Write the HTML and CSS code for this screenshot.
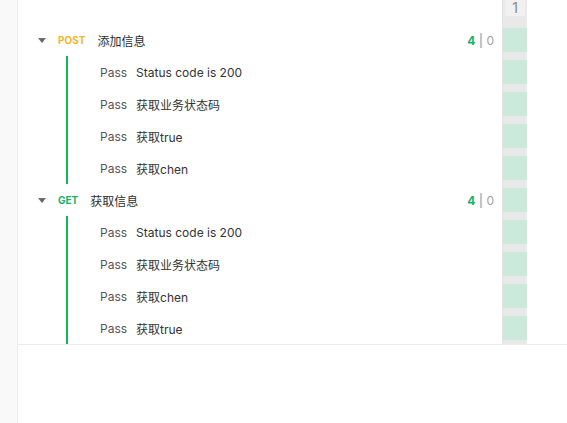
FILE: index.html
```html
<!DOCTYPE html>
<html lang="zh">
<head>
<meta charset="utf-8">
<link rel="stylesheet" href="styles.css">
</head>
<body>
<div class="app">
  <aside class="side"></aside>
  <main class="main">
    <div class="panel">
      <div class="tree">
        <div class="group">
          <div class="row head">
            <span class="caret"></span>
            <span class="method post">POST</span>
            <span class="name">添加信息</span>
            <span class="counts"><b class="ok">4</b><i class="sep"></i><span class="fail">0</span></span>
          </div>
          <div class="children">
            <div class="row test"><span class="pass">Pass</span><span class="tname">Status code is 200</span></div>
            <div class="row test"><span class="pass">Pass</span><span class="tname">获取业务状态码</span></div>
            <div class="row test"><span class="pass">Pass</span><span class="tname">获取true</span></div>
            <div class="row test"><span class="pass">Pass</span><span class="tname">获取chen</span></div>
          </div>
        </div>
        <div class="group">
          <div class="row head">
            <span class="caret"></span>
            <span class="method get">GET</span>
            <span class="name">获取信息</span>
            <span class="counts"><b class="ok">4</b><i class="sep"></i><span class="fail">0</span></span>
          </div>
          <div class="children">
            <div class="row test"><span class="pass">Pass</span><span class="tname">Status code is 200</span></div>
            <div class="row test"><span class="pass">Pass</span><span class="tname">获取业务状态码</span></div>
            <div class="row test"><span class="pass">Pass</span><span class="tname">获取chen</span></div>
            <div class="row test"><span class="pass">Pass</span><span class="tname">获取true</span></div>
          </div>
        </div>
      </div>
      <div class="iter">
        <div class="iter-head"><span class="iter-num">1</span></div>
        <div class="cell"><span></span></div>
        <div class="cell"><span></span></div>
        <div class="cell"><span></span></div>
        <div class="cell"><span></span></div>
        <div class="cell"><span></span></div>
        <div class="cell"><span></span></div>
        <div class="cell"><span></span></div>
        <div class="cell"><span></span></div>
        <div class="cell"><span></span></div>
        <div class="cell"><span></span></div>
      </div>
      <div class="spacer"></div>
    </div>
  </main>
</div>
</body>
</html>
```

FILE: styles.css
```css
* { box-sizing: border-box; }
html, body { margin: 0; padding: 0; height: 100%; background: #fff; }
body {
  font-family: Inter, "Noto Sans CJK SC", sans-serif;
  font-size: 12px;
  color: #333;
}
.app { display: flex; height: 423px; }
.side {
  width: 18px;
  background: #f9f9f9;
  border-right: 1px solid #ececec;
  flex: none;
}
.main { flex: 1; display: flex; flex-direction: column; }
.panel {
  display: flex;
  height: 345px;
  border-bottom: 1px solid #ebebeb;
}
.tree { flex: 1; padding-top: 24px; }
.row { height: 32px; display: flex; align-items: center; }
.head { padding-left: 20px; padding-right: 8px; }
.caret {
  width: 0; height: 0;
  border-left: 4px solid transparent;
  border-right: 4px solid transparent;
  border-top: 5px solid #6b6b6b;
  margin-right: 12px;
}
.method { font-size: 10px; font-weight: 700; margin-right: 12px; }
.post { color: #f4b42a; }
.get { color: #17b26a; }
.name { color: #2d2d2d; font-size: 12px; }
.counts { margin-left: auto; display: flex; align-items: center; font-size: 12px; }
.ok { color: #17b26a; font-weight: 700; }
.sep { display: inline-block; width: 2px; height: 15px; background: #c4c4c4; margin: 0 4px 0 5px; }
.fail { color: #a3a3a3; }
.children {
  margin-left: 48px;
  border-left: 2px solid #0cbb55;
  padding-left: 32px;
}
.pass { color: #555; margin-right: 9px; }
.tname { color: #333; }
.iter {
  width: 25px;
  flex: none;
  background: #e9e9e9;
  border-left: 1px solid #e2e2e2;
  display: flex;
  flex-direction: column;
}
.iter-head { height: 24px; padding: 0 2px; }
.iter-num {
  display: block;
  height: 16px;
  background: #f1f1f1;
  color: #8a8a8a;
  text-align: center;
  font-size: 14px;
  line-height: 15px;
}
.cell { height: 32px; padding: 4px 0; }
.cell span { display: block; height: 24px; background: #cbeadc; }
.spacer { width: 40px; flex: none; }
```
